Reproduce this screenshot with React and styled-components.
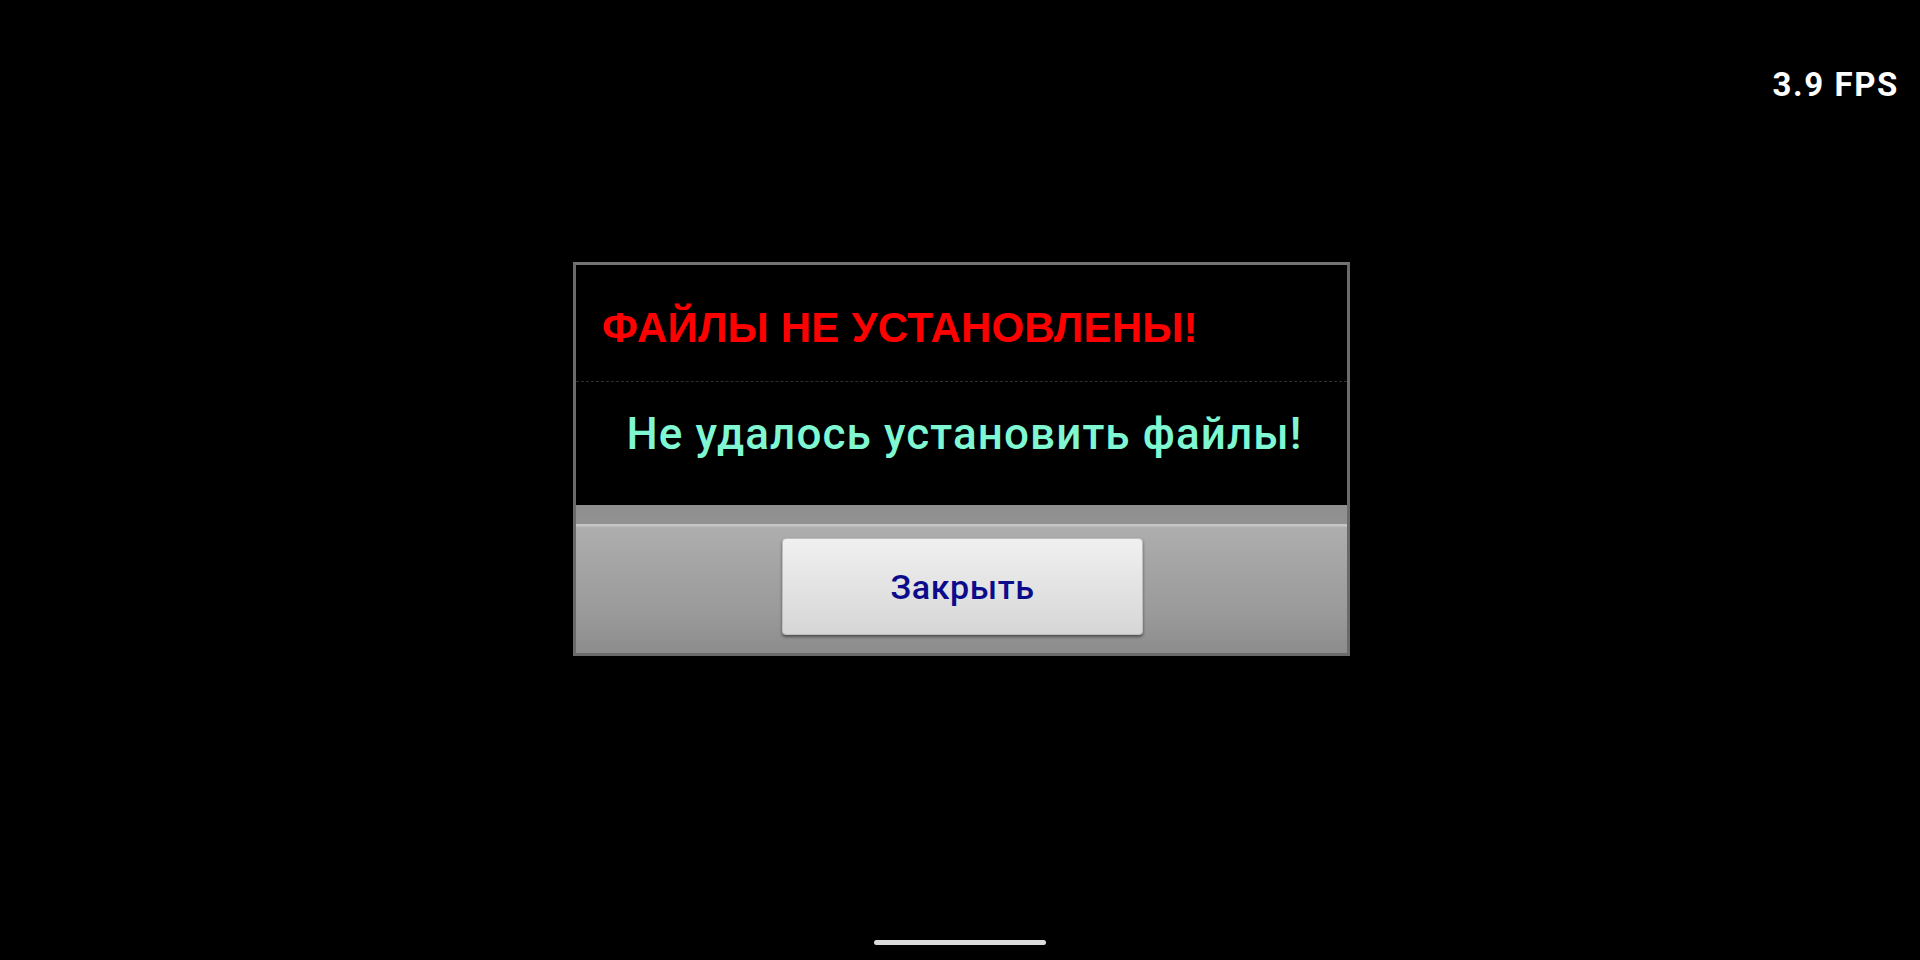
import styled, { createGlobalStyle } from "styled-components";

const GlobalStyle = createGlobalStyle`
  html, body {
    margin: 0;
    padding: 0;
    background: #000;
  }
  body {
    font-family: "Liberation Sans", Arial, sans-serif;
  }
`;

const Screen = styled.div`
  position: relative;
  width: 100%;
  height: 960px;
  overflow: hidden;
  background: #000;
  display: flex;
  flex-direction: column;
  align-items: center;
  padding-top: 262px;
  box-sizing: border-box;
`;

const Fps = styled.div`
  position: absolute;
  top: 65px;
  right: 21px;
  color: #fff;
  font-family: Roboto, "Liberation Sans", sans-serif;
  font-weight: 700;
  font-size: 33px;
  letter-spacing: 1.6px;
`;

const Dialog = styled.div`
  width: 777px;
  margin-left: 3px;
  box-sizing: border-box;
  border: 3px solid #6a6a6a;
  border-top-color: #747474;
  background: #000;
  display: flex;
  flex-direction: column;
`;

const Header = styled.div`
  height: 117px;
  box-sizing: border-box;
  padding: 10px 26px 0;
  display: flex;
  align-items: center;
  border-bottom: 1px dashed #2e2e2e;
`;

const Title = styled.h1`
  margin: 0;
  color: #ff0000;
  font-family: "Liberation Sans", Arial, sans-serif;
  font-weight: 700;
  font-size: 42px;
  letter-spacing: 0.2px;
`;

const Body = styled.div`
  height: 123px;
  box-sizing: border-box;
  padding: 0 0 20px 6px;
  display: flex;
  align-items: center;
  justify-content: center;
`;

const Message = styled.p`
  margin: 0;
  color: #7ff7d2;
  font-family: Roboto, "Liberation Sans", sans-serif;
  font-weight: 500;
  font-size: 44px;
  letter-spacing: 1.1px;
`;

const Footer = styled.div`
  height: 148px;
  box-sizing: border-box;
  padding-top: 33px;
  display: flex;
  justify-content: center;
  align-items: flex-start;
  background: linear-gradient(
    #8f8f8f 0,
    #929292 19px,
    #c6c6c6 19px,
    #c6c6c6 21px,
    #aeaeae 22px,
    #a3a3a3 45%,
    #999 75%,
    #8c8c8c 100%
  );
`;

const Button = styled.button`
  width: 361px;
  height: 97px;
  margin-left: 2px;
  border: 1px solid #bdbdbd;
  border-radius: 4px;
  background: linear-gradient(#f0f0f0, #e2e2e2 55%, #d6d6d6);
  box-shadow: 0 2px 3px rgba(0, 0, 0, 0.45);
  color: #0b0b8c;
  font-family: Roboto, "Liberation Sans", sans-serif;
  font-weight: 500;
  font-size: 34px;
  letter-spacing: 0.6px;
  cursor: pointer;
`;

const HomeBar = styled.div`
  position: absolute;
  left: 874px;
  bottom: 15px;
  width: 172px;
  height: 5px;
  border-radius: 3px;
  background: #dcdcdc;
`;

export default function App() {
  return (
    <>
      <GlobalStyle />
      <Screen>
        <Fps>3.9 FPS</Fps>
        <Dialog>
          <Header>
            <Title>ФАЙЛЫ НЕ УСТАНОВЛЕНЫ!</Title>
          </Header>
          <Body>
            <Message>Не удалось установить файлы!</Message>
          </Body>
          <Footer>
            <Button>Закрыть</Button>
          </Footer>
        </Dialog>
        <HomeBar />
      </Screen>
    </>
  );
}
